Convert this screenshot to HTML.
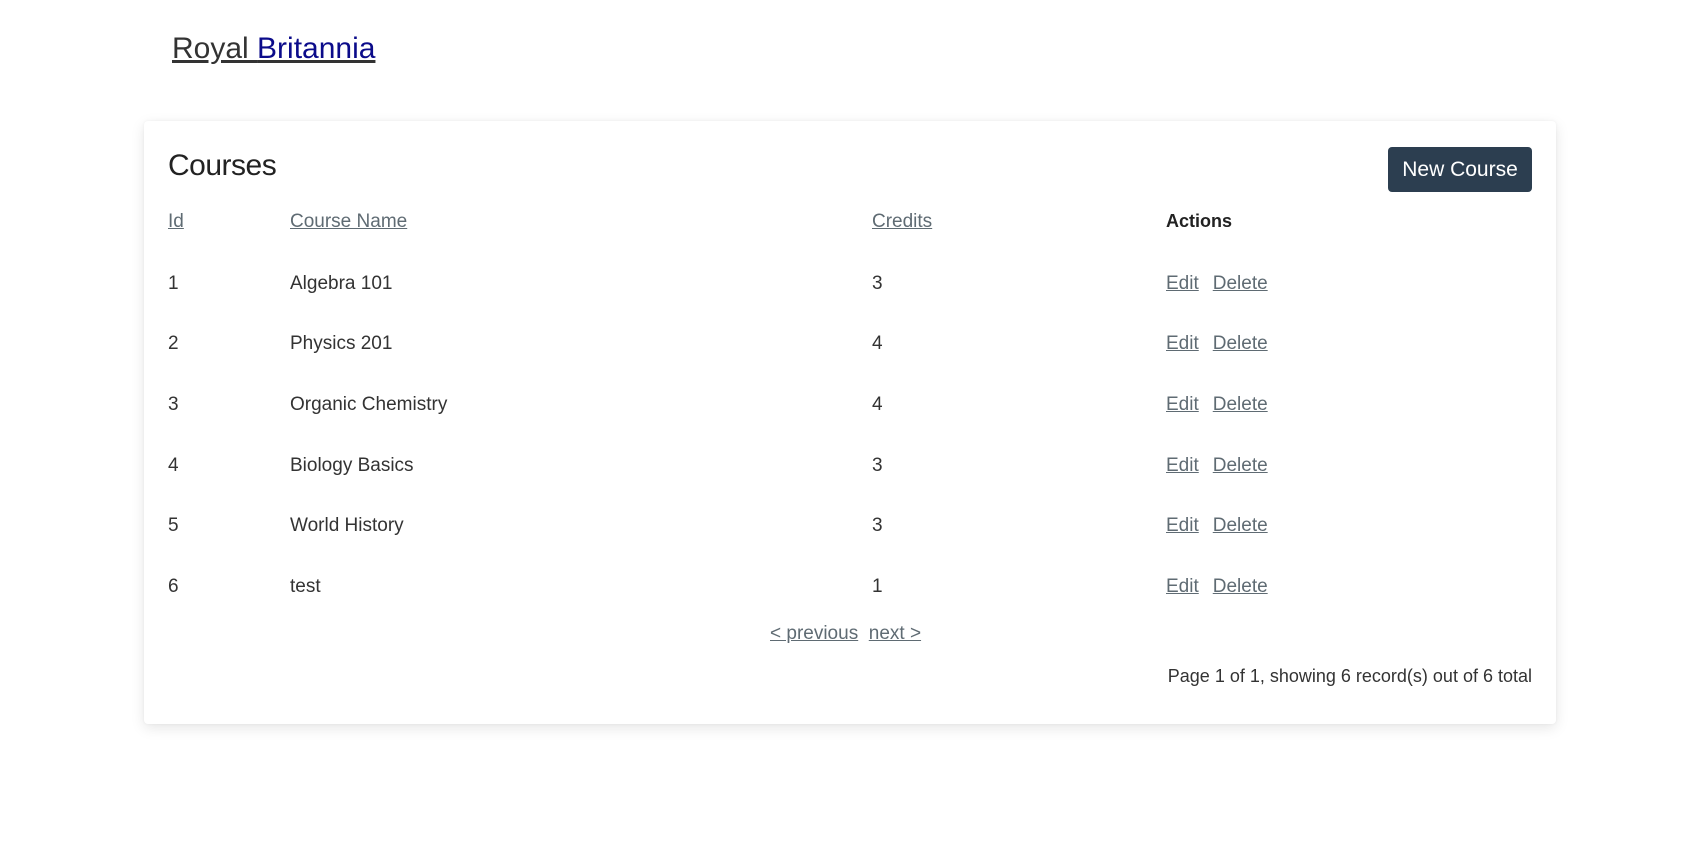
<!DOCTYPE html>
<html><head><meta charset="utf-8"><style>
html,body{margin:0;padding:0;background:#fff;width:1700px;height:868px;overflow:hidden;font-family:"Liberation Sans",sans-serif;color:#333;}
.abs{position:absolute;white-space:nowrap;line-height:1;}
a{color:#5f6b73;text-decoration:underline;}
a.d{margin-left:14px;}
.title{left:172px;top:34px;font-size:30px;text-decoration:underline;color:#333;}
.title span{color:#0b0b8a;}
.card{position:absolute;left:144px;top:121px;width:1412px;height:603px;background:#fff;border-radius:4px;box-shadow:0 4px 14px rgba(0,0,0,0.10),0 0 3px rgba(0,0,0,0.05);}
.h{left:168px;top:151px;font-size:30px;font-weight:300;color:#222;letter-spacing:-0.5px;}
.btn{position:absolute;left:1388px;top:147px;width:144px;height:45px;background:#2c3e50;border-radius:4px;color:#fff;font-size:21px;text-align:center;line-height:45px;}
.t{font-size:19px;}
</style></head><body>
<div class="abs title">Royal <span>Britannia</span></div>
<div class="card"></div>
<div class="abs h">Courses</div>
<div class="btn">New Course</div>
<div class="abs t" style="left:168px;top:212px"><a>Id</a></div>
<div class="abs t" style="left:290px;top:212px"><a>Course Name</a></div>
<div class="abs t" style="left:872px;top:212px"><a>Credits</a></div>
<div class="abs t" style="left:1166px;top:212px;color:#222;font-weight:bold;font-size:18px">Actions</div>

<div class="abs t" style="left:168px;top:274px">1</div><div class="abs t" style="left:290px;top:274px">Algebra 101</div><div class="abs t" style="left:872px;top:274px">3</div><div class="abs t" style="left:1166px;top:274px"><a>Edit</a><a class="d">Delete</a></div>
<div class="abs t" style="left:168px;top:334px">2</div><div class="abs t" style="left:290px;top:334px">Physics 201</div><div class="abs t" style="left:872px;top:334px">4</div><div class="abs t" style="left:1166px;top:334px"><a>Edit</a><a class="d">Delete</a></div>
<div class="abs t" style="left:168px;top:395px">3</div><div class="abs t" style="left:290px;top:395px">Organic Chemistry</div><div class="abs t" style="left:872px;top:395px">4</div><div class="abs t" style="left:1166px;top:395px"><a>Edit</a><a class="d">Delete</a></div>
<div class="abs t" style="left:168px;top:456px">4</div><div class="abs t" style="left:290px;top:456px">Biology Basics</div><div class="abs t" style="left:872px;top:456px">3</div><div class="abs t" style="left:1166px;top:456px"><a>Edit</a><a class="d">Delete</a></div>
<div class="abs t" style="left:168px;top:516px">5</div><div class="abs t" style="left:290px;top:516px">World History</div><div class="abs t" style="left:872px;top:516px">3</div><div class="abs t" style="left:1166px;top:516px"><a>Edit</a><a class="d">Delete</a></div>
<div class="abs t" style="left:168px;top:577px">6</div><div class="abs t" style="left:290px;top:577px">test</div><div class="abs t" style="left:872px;top:577px">1</div><div class="abs t" style="left:1166px;top:577px"><a>Edit</a><a class="d">Delete</a></div>

<div class="abs" style="left:770px;top:624px;font-size:19px"><a>&lt; previous</a>&nbsp;&nbsp;<a>next &gt;</a></div>
<div class="abs" style="right:168px;top:667px;font-size:18px;color:#333">Page 1 of 1, showing 6 record(s) out of 6 total</div>
</body></html>
